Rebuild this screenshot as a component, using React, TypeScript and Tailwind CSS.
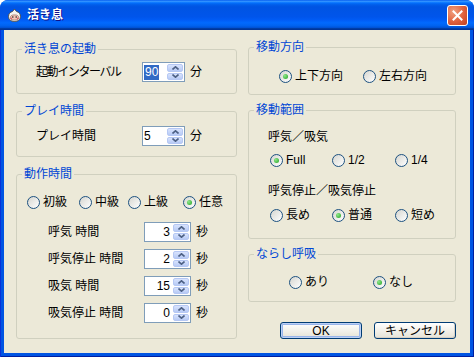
import React from 'react';

type RadioProps = { label: string; checked?: boolean; className?: string };

function Radio({ label, checked = false, className = '' }: RadioProps) {
  return (
    <div className={`flex h-[14px] items-center ${className}`}>
      <span className="flex h-[13px] w-[13px] shrink-0 items-center justify-center rounded-full border border-[#1c5180] bg-linear-to-br from-[#d6d6d0] to-white">
        {checked && (
          <span className="h-[5px] w-[5px] rounded-full bg-[radial-gradient(circle_at_35%_35%,#8ee88a,#21a121)]" />
        )}
      </span>
      <span className="ml-[3px] leading-[14px]">{label}</span>
    </div>
  );
}

function SpinHalf({ up = false }: { up?: boolean }) {
  return (
    <div className="flex flex-1 items-center justify-center rounded-[2px] border border-[#b6c8f4] bg-linear-to-b from-[#d8e3fd] to-[#b7caf5]">
      <svg width="7" height="4" viewBox="0 0 7 4">
        <path
          d={up ? 'M0.5 3.5 L3.5 0.8 L6.5 3.5' : 'M0.5 0.5 L3.5 3.2 L6.5 0.5'}
          fill="none"
          stroke="#4d6185"
          strokeWidth="1.6"
        />
      </svg>
    </div>
  );
}

type SpinProps = { value: string; textWidth: string; right?: boolean; selected?: boolean };

// edit box with up/down buttons; textWidth is the width of the text area
function SpinBox({ value, textWidth, right = false, selected = false }: SpinProps) {
  return (
    <div className="flex h-[20px] shrink-0 border border-[#7f9db9] bg-white">
      <div className={`flex shrink-0 items-center ${textWidth} ${right ? 'justify-end pr-[3px]' : 'justify-start pl-[1px]'}`}>
        <span className={selected ? 'bg-[#316ac5] px-[1px] leading-[15px] text-white' : 'leading-[15px]'}>
          {value}
        </span>
      </div>
      <div className="flex w-[17px] shrink-0 flex-col gap-[1px] py-[1px] pr-[1px]">
        <SpinHalf up />
        <SpinHalf />
      </div>
    </div>
  );
}

type GroupProps = { title: string; className?: string; children?: React.ReactNode };

function Group({ title, className = '', children }: GroupProps) {
  return (
    <fieldset className={`rounded-[3px] border border-[#d0d0bf] ${className}`}>
      <legend className="ml-[5px] px-[2px] leading-[14px] text-[#0046d5]">{title}</legend>
      {children}
    </fieldset>
  );
}

function TimeRow({ label, value }: { label: string; value: string }) {
  return (
    <div className="flex items-center">
      <span className="w-[96px] shrink-0">{label}</span>
      <SpinBox value={value} textWidth="w-[28px]" right />
      <span className="ml-[5px]">秒</span>
    </div>
  );
}

function AppIcon() {
  return (
    <svg width="15" height="15" viewBox="0 0 15 15">
      <path d="M7.5 1 C8.5 2.5 9 3 9.5 3.5 C12 4 13.5 6 13.5 8.5 C13.5 11.5 11 13.5 7.5 13.5 C4 13.5 1.5 11.5 1.5 8.5 C1.5 6 3 4 5.5 3.5 C6 3 6.5 2.5 7.5 1 Z" fill="#f4f4f0" stroke="#505050" strokeWidth="1" />
      <ellipse cx="7.5" cy="9.5" rx="4.2" ry="2.6" fill="#f3c7b8" stroke="#8a5040" strokeWidth="0.6" />
      <circle cx="5.8" cy="9" r="0.8" fill="#222" />
      <circle cx="9.2" cy="9" r="0.8" fill="#222" />
      <circle cx="4.3" cy="10.4" r="0.8" fill="#e06070" />
      <circle cx="10.7" cy="10.4" r="0.8" fill="#e06070" />
    </svg>
  );
}

function CloseButton() {
  return (
    <div className="ml-auto flex h-[21px] w-[21px] items-center justify-center rounded-[3px] border border-white bg-[radial-gradient(circle_at_30%_30%,#f0a080,#e0603c_55%,#c04020)]">
      <svg width="11" height="11" viewBox="0 0 11 11">
        <path d="M1.5 1.5 L9.5 9.5 M9.5 1.5 L1.5 9.5" stroke="white" strokeWidth="2" strokeLinecap="square" />
      </svg>
    </div>
  );
}

export default function App() {
  return (
    <div className="h-[357px] w-[474px] bg-white font-['Liberation_Sans','Noto_Sans_CJK_JP',sans-serif] text-[12px] text-black">
      <div className="flex h-full flex-col overflow-hidden rounded-t-[8px] bg-[#0054e3]">
        {/* title bar */}
        <div className="flex h-[30px] shrink-0 items-center bg-[linear-gradient(180deg,#0058ee_0%,#3593ff_4%,#288eff_6%,#127dff_8%,#036ffc_10%,#0262ee_14%,#0057e5_20%,#0054e3_24%,#0055eb_56%,#005bf5_66%,#026afe_76%,#0062ef_86%,#0052d6_92%,#0040ab_94%,#003092_100%)] pl-[7px] pr-[6px]">
          <AppIcon />
          <span className="ml-[5px] text-[12px] leading-[16px] font-bold text-white [text-shadow:1px_1px_#0f1089]">活き息</span>
          <CloseButton />
        </div>

        <div className="flex flex-1 px-[4px] pb-[4px] shadow-[inset_1px_0_#0831d9,inset_-1px_-1px_#001ea0]">
          <div className="flex flex-1 bg-[#ece9d8] pl-[12px]">
            {/* left column */}
            <div className="flex w-[221px] flex-col gap-[10px] pt-[12px]">
              <Group title="活き息の起動" className="h-[52px]">
                <div className="flex items-center pt-[6px] pl-[19px]">
                  <span className="w-[106px] shrink-0 tracking-[-1.4px]">起動インターバル</span>
                  <SpinBox value="90" textWidth="w-[24px]" selected />
                  <span className="ml-[5px]">分</span>
                </div>
              </Group>

              <Group title="プレイ時間" className="h-[53px]">
                <div className="flex items-center pt-[8px] pl-[19px]">
                  <span className="w-[106px] shrink-0">プレイ時間</span>
                  <SpinBox value="5" textWidth="w-[24px]" />
                  <span className="ml-[5px]">分</span>
                </div>
              </Group>

              <Group title="動作時間" className="h-[172px]">
                <div className="flex pt-[14px] pl-[10px]">
                  <Radio label="初級" className="w-[52px]" />
                  <Radio label="中級" className="w-[49px]" />
                  <Radio label="上級" className="w-[55px]" />
                  <Radio label="任意" checked />
                </div>
                <div className="flex flex-col gap-[7px] pt-[13px] pl-[31px]">
                  <TimeRow label="呼気 時間" value="3" />
                  <TimeRow label="呼気停止 時間" value="2" />
                  <TimeRow label="吸気 時間" value="15" />
                  <TimeRow label="吸気停止 時間" value="0" />
                </div>
              </Group>
            </div>

            {/* right column */}
            <div className="ml-[11px] flex w-[208px] flex-col pt-[10px]">
              <Group title="移動方向" className="h-[55px]">
                <div className="flex pt-[15px] pl-[30px]">
                  <Radio label="上下方向" checked className="w-[84px]" />
                  <Radio label="左右方向" />
                </div>
              </Group>

              <Group title="移動範囲" className="mt-[8px] h-[136px]">
                <div className="pt-[13px] pl-[19px] leading-[14px]">呼気／吸気</div>
                <div className="flex pt-[9px] pl-[21px]">
                  <Radio label="Full" checked className="w-[62px]" />
                  <Radio label="1/2" className="w-[63px]" />
                  <Radio label="1/4" />
                </div>
                <div className="pt-[17px] pl-[19px] leading-[14px]">呼気停止／吸気停止</div>
                <div className="flex pt-[10px] pl-[21px]">
                  <Radio label="長め" className="w-[62px]" />
                  <Radio label="普通" checked className="w-[63px]" />
                  <Radio label="短め" />
                </div>
              </Group>

              <Group title="ならし呼吸" className="mt-[8px] h-[55px]">
                <div className="flex pt-[14px] pl-[40px]">
                  <Radio label="あり" className="w-[84px]" />
                  <Radio label="なし" checked />
                </div>
              </Group>

              <div className="mt-[20px] flex justify-end gap-[12px]">
                <button className="flex h-[17px] w-[82px] items-center justify-center rounded-[3px] border border-[#003c74] bg-linear-to-b from-white to-[#e6e3d6] leading-[14px] shadow-[inset_0_0_0_1px_#bcd0f4,inset_0_0_0_2px_#98b4ea]">
                  OK
                </button>
                <button className="flex h-[17px] w-[82px] items-center justify-center rounded-[3px] border border-[#003c74] bg-linear-to-b from-white to-[#e6e3d6] leading-[14px] shadow-[inset_-1px_-1px_#d6d0c5]">
                  キャンセル
                </button>
              </div>
            </div>
          </div>
        </div>
      </div>
    </div>
  );
}
